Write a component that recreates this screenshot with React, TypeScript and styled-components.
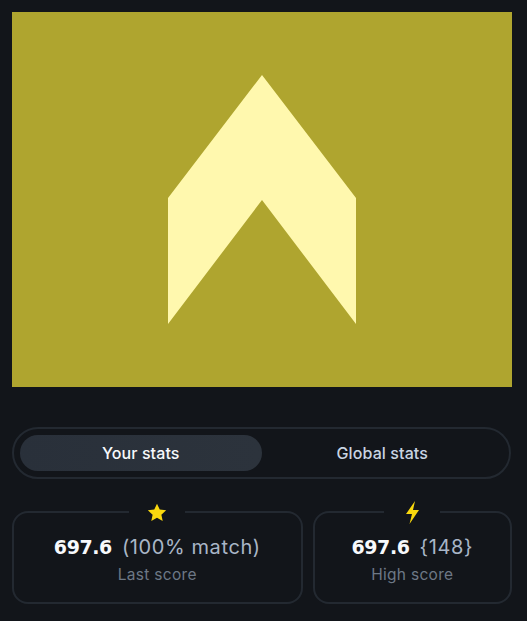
import React, { useState } from "react";
import styled, { createGlobalStyle } from "styled-components";

const Global = createGlobalStyle`
  html, body { margin: 0; padding: 0; background: #12151a; }
  body { font-family: Inter, "Open Sans", sans-serif; }
`;

const Page = styled.div`
  padding: 12px 16px 12px 12px;
  width: 500px;
  display: flex;
  flex-direction: column;
`;

const Artwork = styled.div`
  width: 500px;
  height: 375px;
  background: #afa52f;
  display: flex;
`;

const Toggle = styled.div`
  margin-top: 40px;
  border: 2px solid #232931;
  border-radius: 999px;
  padding: 6px;
  display: grid;
  grid-template-columns: 1fr 1fr;
  width: 499px;
  box-sizing: border-box;
  height: 52px;
`;

const ToggleButton = styled.button<{ $active?: boolean }>`
  border: none;
  border-radius: 999px;
  background: ${(p) => (p.$active ? "linear-gradient(90deg, #29303a, #2c333c)" : "transparent")};
  color: ${(p) => (p.$active ? "#f7f9fc" : "#c9d4e2")};
  font-family: Inter, sans-serif;
  font-size: 16px;
  font-weight: 500;
  letter-spacing: 0.1px;
  cursor: pointer;
  padding: 0;
`;

const Cards = styled.div`
  margin-top: 32px;
  display: grid;
  grid-template-columns: 290fr 199fr;
  gap: 10px;
`;

const Card = styled.div`
  position: relative;
  height: 93px;
  box-sizing: border-box;
  border: 2px solid #232931;
  border-radius: 16px;
  display: flex;
  flex-direction: column;
  align-items: center;
  justify-content: center;
  padding-top: 4px;
`;

const IconBadge = styled.div`
  position: absolute;
  top: -13px;
  left: 50%;
  transform: translateX(-50%);
  width: 56px;
  height: 24px;
  background: #12151a;
  display: flex;
  align-items: center;
  justify-content: center;
`;

const ValueRow = styled.div`
  display: flex;
  align-items: baseline;
  gap: 10px;
  line-height: 1.2;
`;

const Value = styled.span`
  font-family: "DejaVu Sans", sans-serif;
  font-weight: 700;
  font-size: 19px;
  color: #f7f9fc;
  letter-spacing: -0.4px;
`;

const Extra = styled.span`
  font-family: Inter, sans-serif;
  font-size: 20px;
  color: #a9b6c7;
  letter-spacing: 0.6px;
`;

const Label = styled.div`
  margin-top: 6px;
  font-family: Inter, sans-serif;
  font-size: 15.5px;
  color: #6d7886;
  letter-spacing: 0.3px;
`;

const Star = () => (
  <svg width="20" height="19" viewBox="0 0 24 23">
    <path
      d="M12 0.8l3.3 7.1 7.8 0.9-5.8 5.3 1.6 7.7L12 17.9l-6.9 3.9 1.6-7.7L0.9 8.8l7.8-0.9z"
      fill="#f9d80e"
    />
  </svg>
);

const Zap = () => (
  <svg width="15" height="23" viewBox="0 0 15 23">
    <path d="M10 0L1 13h6L4.5 23 14 9H8z" fill="#f9d80e" />
  </svg>
);

export default function App() {
  const [tab, setTab] = useState(0);
  return (
    <>
      <Global />
      <Page>
        <Artwork>
          <svg width="500" height="375" viewBox="0 0 500 375">
            <polygon
              points="250,63 344,186 344,312 250,188 156,312 156,186"
              fill="#fff8ae"
            />
          </svg>
        </Artwork>
        <Toggle>
          <ToggleButton $active={tab === 0} onClick={() => setTab(0)}>
            Your stats
          </ToggleButton>
          <ToggleButton $active={tab === 1} onClick={() => setTab(1)}>
            Global stats
          </ToggleButton>
        </Toggle>
        <Cards>
          <Card>
            <IconBadge>
              <Star />
            </IconBadge>
            <ValueRow>
              <Value>697.6</Value>
              <Extra>(100% match)</Extra>
            </ValueRow>
            <Label>Last score</Label>
          </Card>
          <Card>
            <IconBadge>
              <Zap />
            </IconBadge>
            <ValueRow>
              <Value>697.6</Value>
              <Extra>{"{148}"}</Extra>
            </ValueRow>
            <Label>High score</Label>
          </Card>
        </Cards>
      </Page>
    </>
  );
}
